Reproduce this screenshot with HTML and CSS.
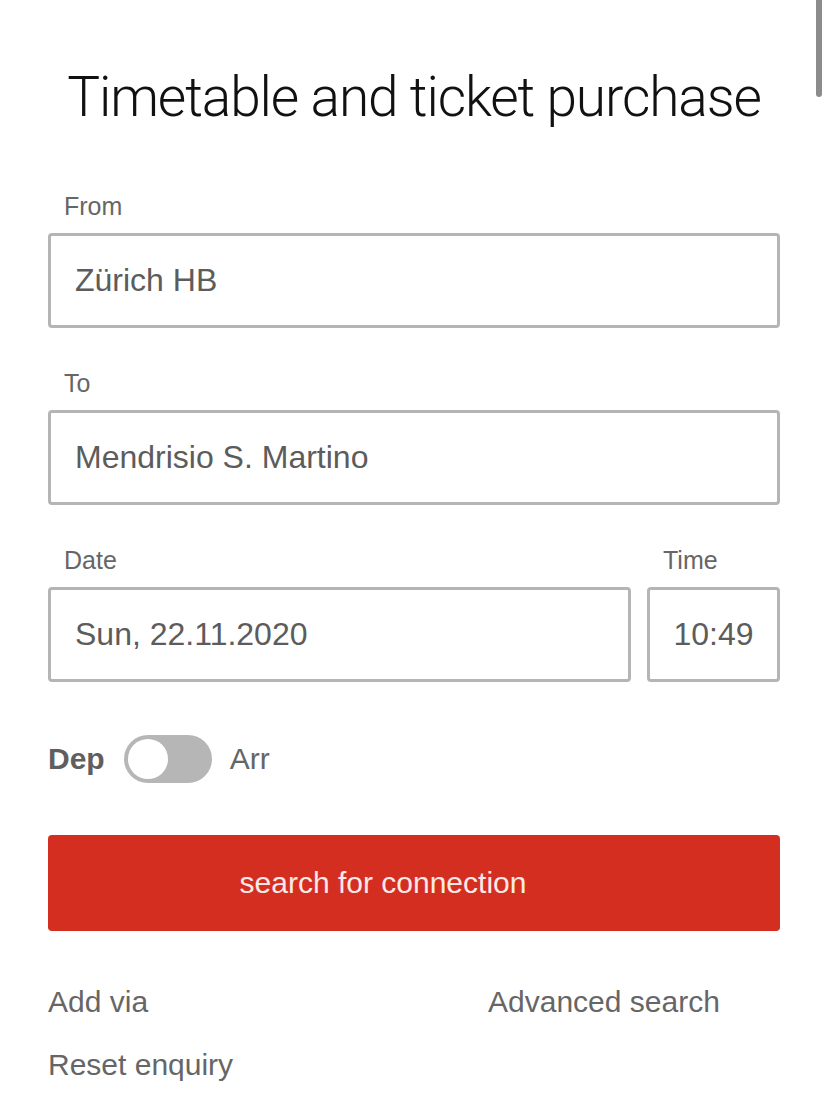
FILE: index.html
```html
<!DOCTYPE html>
<html lang="en">
<head>
<meta charset="utf-8">
<title>Timetable and ticket purchase</title>
<link rel="stylesheet" href="styles.css">
</head>
<body>
<div class="scrollbar"></div>
<main class="page">
  <h1 class="title">Timetable and ticket purchase</h1>

  <div class="field">
    <label class="label">From</label>
    <div class="input">Zürich HB</div>
  </div>

  <div class="field">
    <label class="label">To</label>
    <div class="input">Mendrisio S. Martino</div>
  </div>

  <div class="datetime">
    <div class="field">
      <label class="label">Date</label>
      <div class="input">Sun, 22.11.2020</div>
    </div>
    <div class="field">
      <label class="label">Time</label>
      <div class="input input-time">10:49</div>
    </div>
  </div>

  <div class="toggle-row">
    <span class="dep">Dep</span>
    <span class="switch"><span class="knob"></span></span>
    <span class="arr">Arr</span>
  </div>

  <button class="search">search for connection</button>

  <div class="links">
    <a class="link">Add via</a>
    <a class="link">Advanced search</a>
    <a class="link">Reset enquiry</a>
  </div>
</main>
</body>
</html>
```

FILE: styles.css
```css
html, body {
  margin: 0;
  padding: 0;
  background: #ffffff;
}

body {
  font-family: "Liberation Sans", Arial, sans-serif;
  color: #666666;
}

.scrollbar {
  position: fixed;
  top: 0;
  right: 6px;
  width: 6px;
  height: 97px;
  background: #8c8c8c;
  border-radius: 0 0 3px 3px;
}

.page {
  padding: 0 48px;
}

.title {
  margin: 0;
  padding-top: 64px;
  font-family: "Roboto", "Liberation Sans", sans-serif;
  font-weight: 300;
  font-size: 55px;
  line-height: 66px;
  color: #111111;
  text-align: center;
  letter-spacing: -1.1px;
  white-space: nowrap;
}

.field {
  display: flex;
  flex-direction: column;
  margin-top: 41px;
}

.title + .field {
  margin-top: 62px;
}

.label {
  font-size: 25px;
  line-height: 28px;
  padding-left: 16px;
  margin-bottom: 13px;
  color: #666666;
}

.input {
  box-sizing: border-box;
  height: 95px;
  border: 3px solid #b5b5b5;
  border-radius: 4px;
  padding: 0 24px;
  display: flex;
  align-items: center;
  font-size: 32px;
  color: #5c5c5c;
}

.datetime {
  display: grid;
  grid-template-columns: 1fr 133px;
  column-gap: 16px;
}

.input-time {
  justify-content: center;
  padding: 0;
}

.toggle-row {
  display: flex;
  align-items: center;
  margin-top: 53px;
  height: 48px;
}

.dep {
  font-weight: bold;
  font-size: 30px;
  color: #5f5f5f;
}

.switch {
  box-sizing: border-box;
  margin: 0 18px 0 19px;
  width: 88px;
  height: 48px;
  border-radius: 24px;
  background: #b6b6b6;
  padding: 4px;
  display: flex;
  align-items: center;
}

.knob {
  width: 40px;
  height: 40px;
  border-radius: 50%;
  background: #ffffff;
}

.arr {
  font-size: 30px;
  color: #666666;
}

.search {
  display: block;
  box-sizing: border-box;
  width: 100%;
  height: 96px;
  margin-top: 52px;
  border: none;
  border-radius: 4px;
  background: #d42e20;
  color: #fbe9e7;
  font-family: "Liberation Sans", Arial, sans-serif;
  font-size: 30px;
  padding: 0 62px 0 0;
  text-align: center;
}

.links {
  display: grid;
  grid-template-columns: 440px 1fr;
  row-gap: 29px;
  margin-top: 54px;
}

.link {
  font-size: 30px;
  line-height: 34px;
  color: #666666;
}
```
